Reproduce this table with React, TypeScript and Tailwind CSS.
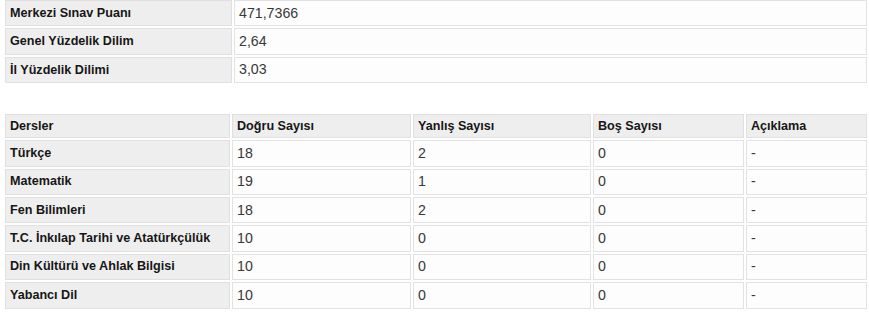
import React from "react";

const top = [
  ["Merkezi Sınav Puanı", "471,7366"],
  ["Genel Yüzdelik Dilim", "2,64"],
  ["İl Yüzdelik Dilimi", "3,03"],
];

const rows = [
  ["Türkçe", "18", "2", "0", "-"],
  ["Matematik", "19", "1", "0", "-"],
  ["Fen Bilimleri", "18", "2", "0", "-"],
  ["T.C. İnkılap Tarihi ve Atatürkçülük", "10", "0", "0", "-"],
  ["Din Kültürü ve Ahlak Bilgisi", "10", "0", "0", "-"],
  ["Yabancı Dil", "10", "0", "0", "-"],
];

const headers = ["Dersler", "Doğru Sayısı", "Yanlış Sayısı", "Boş Sayısı", "Açıklama"];

const labelCls =
  "flex items-center bg-[#eeeeee] border border-[#e0e0e0] pl-[4px] text-[12.6px] font-bold text-[#161616] whitespace-nowrap overflow-hidden";
const valueCls =
  "flex items-center bg-[#fdfdfd] border border-[#e2e2e2] pl-[4px] text-[14.2px] text-[#383838] whitespace-nowrap overflow-hidden";

export default function App() {
  return (
    <div
      className="w-[869px] h-[316px] bg-white overflow-hidden pl-[5px] pr-[2px]"
      style={{ fontFamily: '"Liberation Sans", Arial, sans-serif' }}
    >
      <div className="grid grid-cols-[227px_1fr] gap-[2px] auto-rows-[26.4px]">
        {top.map(([l, v]) => (
          <React.Fragment key={l}>
            <div className={labelCls}>{l}</div>
            <div className={valueCls}>{v}</div>
          </React.Fragment>
        ))}
      </div>
      <div className="mt-[31px] grid grid-cols-[225px_179px_178px_151px_1fr] gap-[2px] grid-rows-[24px_repeat(6,26.4px)]">
        {headers.map((h) => (
          <div key={h} className={labelCls}>
            {h}
          </div>
        ))}
        {rows.map((r) => (
          <React.Fragment key={r[0]}>
            <div className={labelCls}>{r[0]}</div>
            {r.slice(1).map((c, i) => (
              <div key={i} className={valueCls}>
                {c}
              </div>
            ))}
          </React.Fragment>
        ))}
      </div>
    </div>
  );
}
